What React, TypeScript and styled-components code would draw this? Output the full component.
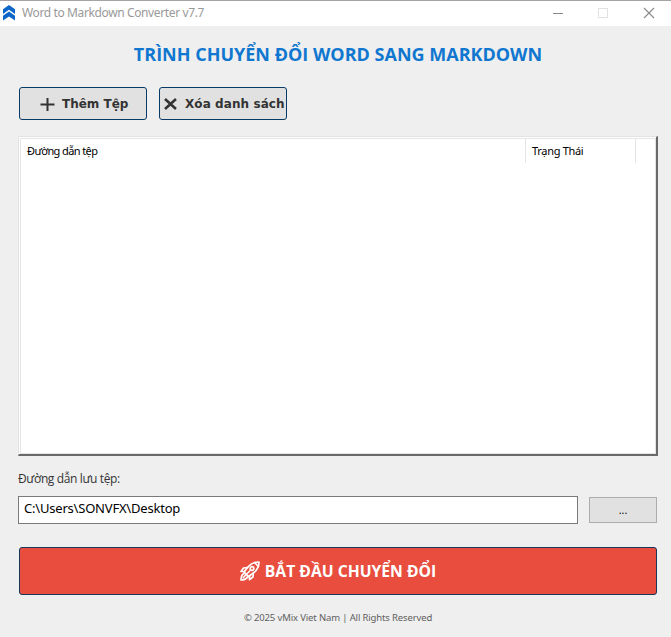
import React from "react";
import styled, { createGlobalStyle } from "styled-components";

const GlobalStyle = createGlobalStyle`
  *, *::before, *::after { box-sizing: border-box; }
  html, body { margin: 0; height: 100%; background: #efefef; overflow: hidden; }
  button, input { font: inherit; margin: 0; padding: 0; border-radius: 0; appearance: none; }
`;

const Window = styled.div`
  width: 671px;
  height: 637px;
  display: flex;
  flex-direction: column;
  background: #efefef;
  color: #000;
  font-family: "Open Sans", "Noto Sans", sans-serif;
  white-space: nowrap;
`;

const TitleBar = styled.header`
  display: flex;
  align-items: center;
  height: 26px;
  flex: none;
  padding: 0 16px 1px 3px;
  background: #fff;
  border-top: 1px solid #a5a3a5;
`;

const WindowTitle = styled.span`
  margin-left: 7px;
  flex: 1;
  font-family: "Noto Sans", sans-serif;
  font-size: 12px;
  line-height: 16px;
  letter-spacing: -0.38px;
  color: #999;
`;

const WindowControls = styled.div`
  display: flex;
  align-items: center;
  gap: 34px;
`;

const Content = styled.main`
  display: flex;
  flex-direction: column;
  padding: 0 13px 0 18px;
`;

const Heading = styled.h1`
  margin: 15px 0 0;
  height: 26px;
  line-height: 26px;
  text-align: center;
  font-size: 18px;
  font-weight: 700;
  color: #0f77cf;
`;

const Toolbar = styled.div`
  display: flex;
  gap: 12px;
  margin: 20px 0 16px 1px;
`;

const ToolButton = styled.button<{ $inset: number; $gap: number }>`
  display: flex;
  align-items: center;
  gap: ${(p) => p.$gap}px;
  width: 128px;
  height: 33px;
  padding: 1px 0 0 ${(p) => p.$inset}px;
  background: #e1e1e1;
  border: 1px solid #093a66;
  border-radius: 3px;
  color: #333;
  font-family: "DejaVu Sans", sans-serif;
  font-size: 12px;
  font-weight: 700;
  white-space: nowrap;
  svg { flex: none; }
`;

const ToolLabel = styled.span<{ $spacing: number }>`
  letter-spacing: ${(p) => p.$spacing}px;
`;

const FileList = styled.section`
  width: 640px;
  height: 320px;
  background: #fff;
  border: 1px solid #e3e3e3;
  border-right: 2px solid #696969;
  border-bottom: 2px solid #696969;
  box-shadow: inset 1px 1px #fff, inset 2px 2px #e5e5e5, inset -1px -1px #e3e3e3;
`;

const ListHeader = styled.div`
  display: grid;
  grid-template-columns: 507px 110px 1fr;
  height: 24px;
  margin: 2px 2px 0 0;
`;

const Column = styled.div<{ $spacing: number }>`
  padding-left: 8px;
  border-right: 1px solid #e5e5e5;
  font-family: "Noto Sans", sans-serif;
  font-size: 11px;
  line-height: 23px;
  letter-spacing: ${(p) => p.$spacing}px;
  & + & { padding-left: 6px; }
`;

const FieldLabel = styled.label`
  margin-top: 14px;
  height: 18px;
  font-size: 12px;
  line-height: 18px;
  letter-spacing: -0.37px;
  color: #333;
`;

const PathRow = styled.div`
  display: flex;
  gap: 11px;
  margin-top: 8px;
  align-items: center;
`;

const PathInput = styled.input`
  width: 560px;
  height: 28px;
  padding: 0 0 4px 5px;
  background: #fff;
  border: 1px solid #7a7a7a;
  outline: none;
  color: #000;
  font-family: "Noto Sans", sans-serif;
  font-size: 13px;
  letter-spacing: -0.2px;
`;

const BrowseButton = styled.button`
  width: 68px;
  height: 26px;
  background: #e1e1e1;
  border: 1px solid #adadad;
  font-size: 11px;
  line-height: 24px;
  color: #000;
`;

const StartButton = styled.button`
  display: flex;
  align-items: center;
  justify-content: center;
  gap: 5px;
  width: 638px;
  height: 48px;
  margin: 23px 0 0 1px;
  background: #e84d3d;
  border: 1px solid #17365b;
  border-radius: 3px;
  color: #fff;
  font-size: 15.7px;
  font-weight: 700;
  line-height: 24px;
`;

const Footer = styled.footer`
  margin-top: 15px;
  text-align: center;
  font-family: "Noto Sans", sans-serif;
  font-size: 9.5px;
  line-height: 16px;
  letter-spacing: -0.14px;
  color: #606060;
`;

const AppIcon = () => (
  <svg width="12" height="16" viewBox="0 0 12 16" fill="#0b66c8">
    <path d="M6 0 12 4.3V9L6 4.8 0 9V4.3Z" />
    <path d="M6 6.6 12 10.8V15.6L6 11.6 0 15.6V10.8Z" />
  </svg>
);

const MinimizeIcon = () => (
  <svg width="11" height="11" viewBox="0 0 11 11" stroke="#888">
    <path d="M0 5.5H10" />
  </svg>
);

const MaximizeIcon = () => (
  <svg width="11" height="11" viewBox="0 0 11 11" fill="none" stroke="#e2e2e2">
    <rect x="0.5" y="0.5" width="9" height="9" />
  </svg>
);

const CloseIcon = () => (
  <svg width="12" height="12" viewBox="0 0 12 12" stroke="#888" strokeWidth="1.1">
    <path d="M1 1 11 11M11 1 1 11" />
  </svg>
);

const PlusIcon = () => (
  <svg width="15" height="15" viewBox="0 0 15 15" stroke="#333" strokeWidth="2">
    <path d="M0.5 7.5H14.5M7.5 1V14" />
  </svg>
);

const CrossIcon = () => (
  <svg width="13" height="12" viewBox="0 0 13 12" stroke="#333" strokeWidth="2.6">
    <path d="M1 1 12 11M12 1 1 11" />
  </svg>
);

const RocketIcon = () => (
  <svg width="20" height="20" viewBox="0 0 20 20" fill="none" stroke="#fff" strokeWidth="1.7" strokeLinejoin="round" strokeLinecap="round">
    <path d="M19 1Q12 1 8 6L4 11 8.5 15.5 14 11.5Q19 7.5 19 1Z" />
    <path d="M14.5 1.5 18.5 5.5" />
    <circle cx="12" cy="7.5" r="1.8" />
    <path d="M7.5 6.7 3.5 7 1 10.5 4.7 10.5M13.3 12.3 13 16 9.5 18.7V15" />
    <path d="M9.7 10 3.3 16.5M4 12.5Q1 14 1 19 6 19 7.5 16" />
  </svg>
);

export default function App() {
  return (
    <>
      <GlobalStyle />
      <Window>
        <TitleBar>
          <AppIcon />
          <WindowTitle>Word to Markdown Converter v7.7</WindowTitle>
          <WindowControls>
            <MinimizeIcon />
            <MaximizeIcon />
            <CloseIcon />
          </WindowControls>
        </TitleBar>
        <Content>
          <Heading>TRÌNH CHUYỂN ĐỔI WORD SANG MARKDOWN</Heading>
          <Toolbar>
            <ToolButton $inset={20} $gap={7}>
              <PlusIcon />
              <ToolLabel $spacing={0}>Thêm Tệp</ToolLabel>
            </ToolButton>
            <ToolButton $inset={4} $gap={8}>
              <CrossIcon />
              <ToolLabel $spacing={0.08}>Xóa danh sách</ToolLabel>
            </ToolButton>
          </Toolbar>
          <FileList>
            <ListHeader>
              <Column $spacing={-0.6}>Đường dẫn tệp</Column>
              <Column $spacing={-0.3}>Trạng Thái</Column>
            </ListHeader>
          </FileList>
          <FieldLabel htmlFor="output-path">Đường dẫn lưu tệp:</FieldLabel>
          <PathRow>
            <PathInput id="output-path" defaultValue="C:\Users\SONVFX\Desktop" />
            <BrowseButton>...</BrowseButton>
          </PathRow>
          <StartButton>
            <RocketIcon />
            <span>BẮT ĐẦU CHUYỂN ĐỔI</span>
          </StartButton>
          <Footer>© 2025 vMix Viet Nam | All Rights Reserved</Footer>
        </Content>
      </Window>
    </>
  );
}
